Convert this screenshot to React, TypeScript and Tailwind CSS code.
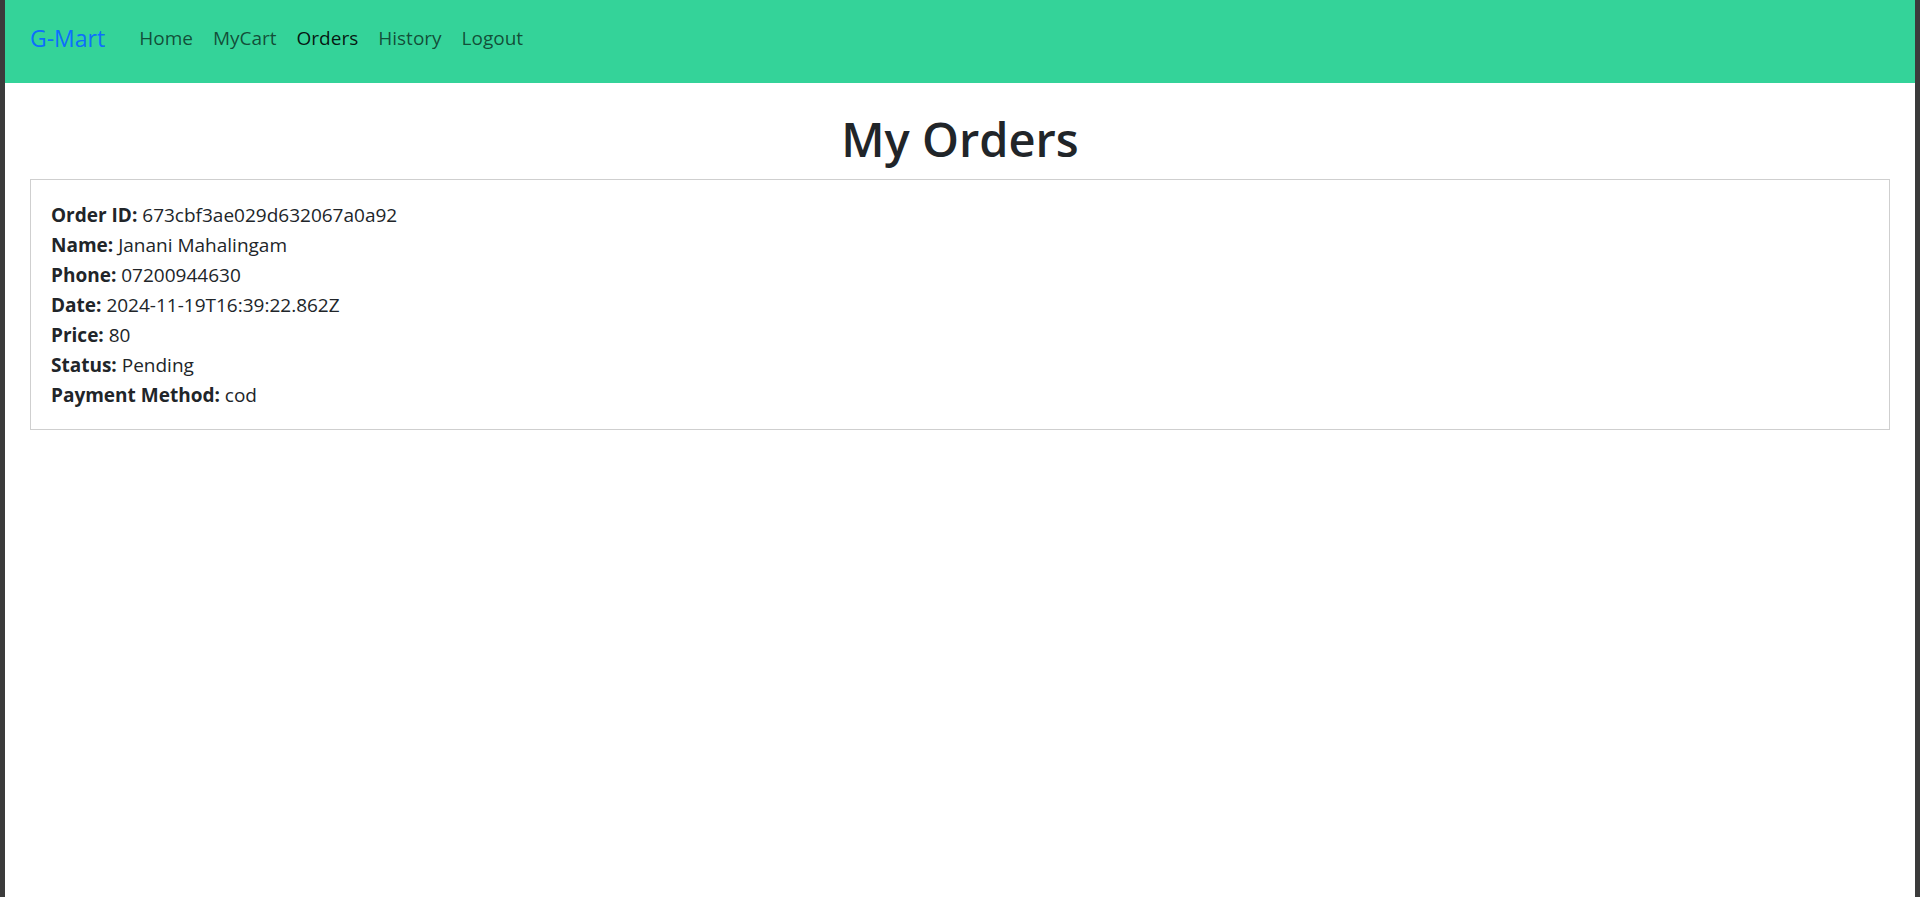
import React from "react";

const links = ["Home", "MyCart", "Orders", "History", "Logout"];

const order = [
  { label: "Order ID:", value: "673cbf3ae029d632067a0a92" },
  { label: "Name:", value: "Janani Mahalingam" },
  { label: "Phone:", value: "07200944630" },
  { label: "Date:", value: "2024-11-19T16:39:22.862Z" },
  { label: "Price:", value: "80" },
  { label: "Status:", value: "Pending" },
  { label: "Payment Method:", value: "cod" },
];

export default function App() {
  return (
    <div
      className="flex h-[897px] w-full bg-white text-[#212529]"
      style={{ fontFamily: '"Open Sans", "Noto Sans", sans-serif' }}
    >
      <div className="w-[5px] bg-[#3b3b3b]" />
      <div className="flex flex-1 flex-col">
        <nav className="flex h-[83px] items-center bg-[#34d399] px-[25px] pb-[6px]">
          <span className="mr-[24px] text-[23px] text-[#0d6efd]">G-Mart</span>
          <ul className="flex">
            {links.map((l) => (
              <li
                key={l}
                className={`px-[10px] text-[19px] ${
                  l === "Orders" ? "text-black/90" : "text-black/65"
                }`}
              >
                {l}
              </li>
            ))}
          </ul>
        </nav>
        <h1 className="mt-[26px] mb-[10px] text-center text-[47px] leading-[60px] font-semibold">
          My Orders
        </h1>
        <div className="mx-[25px] border border-[#cfcfcf] px-[20px] pt-[20px] pb-[19px]">
          {order.map((o) => (
            <div key={o.label} className="text-[19px] leading-[30px]">
              <strong className="font-bold">{o.label}</strong> {o.value}
            </div>
          ))}
        </div>
      </div>
      <div className="w-[5px] bg-[#3b3b3b]" />
    </div>
  );
}
